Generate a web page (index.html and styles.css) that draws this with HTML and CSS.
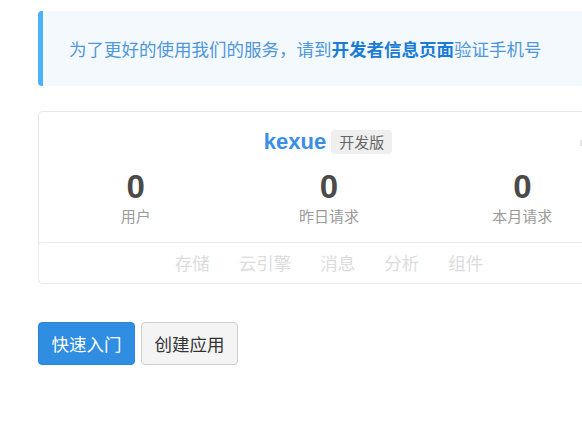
FILE: index.html
```html
<!DOCTYPE html>
<html lang="zh-CN">
<head>
<meta charset="utf-8">
<link rel="stylesheet" href="styles.css">
</head>
<body>
<div class="page">
  <div class="alert">为了更好的使用我们的服务，请到<a class="alert-link">开发者信息页面</a>验证手机号</div>

  <div class="card">
    <div class="card-head">
      <span class="app-name">kexue</span>
      <span class="badge">开发版</span>
      <span class="head-tool"></span>
    </div>
    <div class="stats">
      <div class="stat"><div class="num">0</div><div class="label">用户</div></div>
      <div class="stat"><div class="num">0</div><div class="label">昨日请求</div></div>
      <div class="stat"><div class="num">0</div><div class="label">本月请求</div></div>
    </div>
    <div class="tabs">
      <span class="tab">存储</span>
      <span class="tab">云引擎</span>
      <span class="tab">消息</span>
      <span class="tab">分析</span>
      <span class="tab">组件</span>
    </div>
  </div>

  <div class="actions">
    <button class="btn btn-primary">快速入门</button>
    <button class="btn btn-default">创建应用</button>
  </div>
</div>
</body>
</html>
```

FILE: styles.css
```css
html, body {
  margin: 0;
  padding: 0;
  background: #fff;
  overflow: hidden;
}
body {
  font-family: "Noto Sans CJK SC", "Liberation Sans", sans-serif;
  color: #333;
}
.page {
  padding: 11px 0 0 38px;
  width: 600px;
}
.alert {
  width: 582px;
  height: 75px;
  box-sizing: border-box;
  background: #f4f9fe;
  border-left: 5px solid #4cb1ff;
  border-radius: 4px;
  padding-left: 26px;
  display: flex;
  align-items: center;
  font-size: 17.5px;
  color: #4f97db;
  white-space: nowrap;
}
.alert-link {
  font-weight: bold;
  color: #1a7cd6;
}
.card {
  position: relative;
  margin-top: 25px;
  width: 582px;
  height: 173px;
  box-sizing: border-box;
  border: 1px solid #e8e8e8;
  border-radius: 4px;
  display: flex;
  flex-direction: column;
}
.card-head {
  height: 47px;
  padding-top: 17px;
  box-sizing: border-box;
  display: flex;
  justify-content: center;
  align-items: flex-start;
  gap: 5px;
  padding-right: 2px;
}
.app-name {
  font-family: "Liberation Sans", Arial, sans-serif;
  font-weight: bold;
  font-size: 22px;
  line-height: 26px;
  color: #3a8ee4;
}
.badge {
  height: 24px;
  line-height: 24px;
  padding: 0 8px;
  background: #efefef;
  border-radius: 4px;
  font-size: 15px;
  color: #666;
  margin-top: 1px;
}
.head-tool {
  position: absolute;
  left: 541px;
  top: 28px;
  width: 3px;
  height: 6px;
  background: #e6e6e6;
}
.stats {
  display: grid;
  grid-template-columns: repeat(3, 1fr);
  height: 83px;
}
.stat {
  text-align: center;
}
.num {
  font-family: "Liberation Sans", Arial, sans-serif;
  font-weight: bold;
  font-size: 33px;
  line-height: 36px;
  color: #4a4a4a;
  margin-top: 10px;
}
.label {
  font-size: 15px;
  line-height: 22px;
  color: #9a9a9a;
}
.tabs {
  flex: 1;
  margin-left: -1px;
  border-top: 1px solid #ededed;
  border-left: 1px solid #ededed;
  border-radius: 4px 0 0 4px;
  display: flex;
  justify-content: center;
  align-items: center;
  gap: 29px;
  font-size: 17.5px;
  color: #dcdcdc;
  padding-bottom: 2px;
}
.actions {
  margin-top: 38px;
  display: flex;
  gap: 6px;
}
.btn {
  height: 43px;
  box-sizing: border-box;
  border-radius: 4px;
  font-family: "Noto Sans CJK SC", sans-serif;
  font-size: 17.5px;
  padding: 0 12px;
  white-space: nowrap;
  cursor: pointer;
}
.btn-primary {
  padding: 0 12.5px;
  background: #2f8de2;
  border: 1px solid #2a86da;
  color: #fff;
}
.btn-default {
  padding: 0 12.5px;
  background: #f4f4f4;
  border: 1px solid #cfcfcf;
  color: #333;
}
```
